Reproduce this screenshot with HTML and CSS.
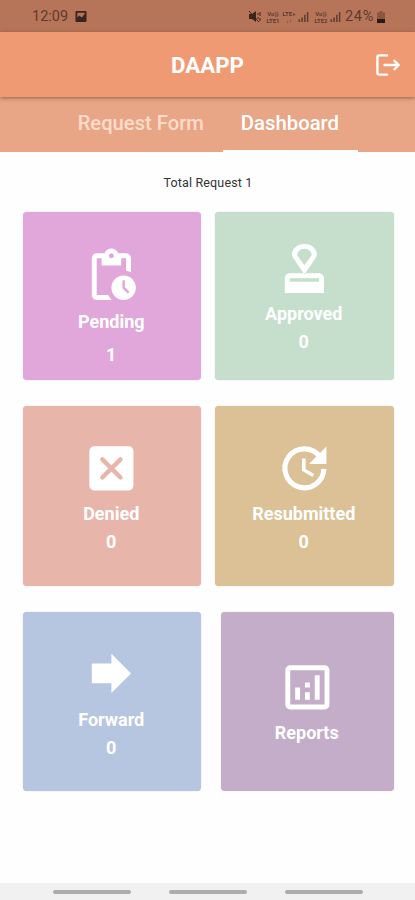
FILE: index.html
```
<!DOCTYPE html>
<html lang="en">
<head>
  <meta charset="UTF-8" />
  <meta name="viewport" content="width=device-width, initial-scale=1.0" />
  <title>DAAPP</title>
  <link rel="stylesheet" href="styles.css">
</head>
<body>
  <div class="status-bar">
    <span class="time">12:09</span>
    <svg class="picture" viewBox="0 0 12 12"><path fill="#3c251c" fill-rule="evenodd" d="M1 0h10a1 1 0 0 1 1 1v10a1 1 0 0 1-1 1H1a1 1 0 0 1-1-1V1a1 1 0 0 1 1-1zM2 2v5l2-2 3 2 3-4V2z"/></svg>
    <div class="status-icons">
      <svg class="mute" viewBox="0 0 13 13"><path fill="#3c251c" d="M1 4h3l4-3v11L4 9H1z"/><path d="M1 1l10 11M10 3v2M12 2v4M10 7v2M12 8v3" stroke="#3c251c" fill="none"/></svg>
      <span class="lte"><span>Vo))</span><span>LTE1</span></span>
      <span class="lte"><span>LTE+</span><span>↓↑</span></span>
      <svg class="signal" viewBox="0 0 11 12"><path d="M1 12V9M4 12V7M7 12V4M10 12V1" stroke="#5e3b2d" stroke-width="1.6"/></svg>
      <span class="lte"><span>Vo))</span><span>LTE2</span></span>
      <svg class="signal" viewBox="0 0 11 12"><path d="M1 12V9M4 12V7M7 12V4M10 12V1" stroke="#5e3b2d" stroke-width="1.6"/></svg>
      <span class="percent">24%</span>
      <svg class="battery" viewBox="0 0 8 12"><path fill="#8a5641" d="M2.500 0h3v1.500H8V9H0V1.500h2.500z"/><path fill="#2c1a13" d="M0 8h8v4H0z"/></svg>
    </div>
  </div>

  <header class="app-bar">
    <h1>DAAPP</h1>
    <svg class="logout" viewBox="0 0 24 22" fill="none" stroke="#fff" stroke-width="2.400" stroke-linecap="round" stroke-linejoin="round"><path d="M11 1.400H3.200Q1.400 1.400 1.400 3.200v15.600q0 1.800 1.800 1.800H11M8.500 11H22.500M18.500 6.800l4.200 4.200-4.200 4.200"/></svg>
  </header>

  <nav class="tabs">
    <a class="tab">Request Form</a>
    <a class="tab active">Dashboard</a>
  </nav>

  <main>
    <p class="total">Total Request 1</p>

    <div class="row">
      <div class="card pending">
        <svg class="icon" viewBox="0 0 24 24"><path d="M17 12c-2.760 0-5 2.240-5 5s2.240 5 5 5 5-2.240 5-5-2.240-5-5-5zm1.650 7.350L16.500 17.200V14h1v2.790l1.850 1.850-.7.71zM18 3h-3.180C14.400 1.840 13.300 1 12 1s-2.400.84-2.820 2H6c-1.100 0-2 .9-2 2v15c0 1.100.9 2 2 2h6.110c-.59-.57-1.070-1.250-1.420-2H6V5h2v3h8V5h2v5.080c.71.1 1.380.31 2 .6V5c0-1.100-.9-2-2-2zm-6 2c-.55 0-1-.45-1-1s.45-1 1-1 1 .45 1 1-.45 1-1 1z"/></svg>
        <span class="label">Pending</span>
        <span class="count">1</span>
      </div>
      <div class="card approved">
        <svg class="icon" viewBox="0 0 24 24"><path fill-rule="evenodd" d="M4 16v6h16v-6c0-1.100-.9-2-2-2H6c-1.100 0-2 .9-2 2zm2 0h12v1.500H6zM12 2C9.600 2 7.800 3.200 7.100 5.200c-.3.900-.2 1.700.2 2.400L12 14.500l4.700-6.900c.4-.7.500-1.500.2-2.400C16.200 3.200 14.400 2 12 2zm0 2c1.400 0 2.400.7 2.900 1.900.1.300.1.600-.1.900L12 10.700 9.200 6.800c-.2-.3-.2-.6-.1-.9C9.600 4.700 10.600 4 12 4z"/></svg>
        <span class="label">Approved</span>
        <span class="count">0</span>
      </div>
    </div>

    <div class="row">
      <div class="card denied">
        <svg class="icon" viewBox="0 0 24 24"><rect x="3" y="3" width="18" height="18" rx="2"/><path d="M8.300 8.300l7.400 7.400M15.700 8.300l-7.400 7.400" stroke="#e8b5aa" stroke-width="1.800" stroke-linecap="round"/></svg>
        <span class="label">Denied</span>
        <span class="count">0</span>
      </div>
      <div class="card resubmitted">
        <svg class="icon" viewBox="0 0 24 24"><path d="M18.300 7.100A7.950 7.950 0 1 0 19.950 12.200" fill="none" stroke="#fff" stroke-width="2.100"/><path d="M21 3.100v7.100h-7.100z"/><path d="M11 8h1.500v4.250l3.500 2.080-.72 1.210L11 13z"/></svg>
        <span class="label">Resubmitted</span>
        <span class="count">0</span>
      </div>
    </div>

    <div class="row">
      <div class="card forward">
        <svg class="icon" viewBox="0 0 24 24"><path d="M12 8V4l8 8-8 8v-4H4V8z"/></svg>
        <span class="label">Forward</span>
        <span class="count">0</span>
      </div>
      <div class="card reports">
        <svg class="icon" viewBox="0 0 24 24"><path d="M19 3H5c-1.100 0-2 .9-2 2v14c0 1.100.9 2 2 2h14c1.100 0 2-.9 2-2V5c0-1.100-.9-2-2-2zm0 16H5V5h14v14z"/><path d="M7 12h2v5H7zM15 7h2v10h-2zM11 14h2v3h-2zM11 10h2v2h-2z"/></svg>
        <span class="label">Reports</span>
      </div>
    </div>
  </main>

  <footer class="nav-bar">
    <span class="pill"></span>
    <span class="pill"></span>
    <span class="pill"></span>
  </footer>
</body>
</html>
```
FILE: styles.css
```
* {
  box-sizing: border-box;
}

body {
  margin: 0;
  height: 900px;
  display: flex;
  flex-direction: column;
  background: #fefefe;
  font-family: Roboto, "Liberation Sans", sans-serif;
  overflow: hidden;
}

svg {
  display: block;
  flex-shrink: 0;
}

.status-bar {
  height: 32px;
  display: flex;
  align-items: center;
  padding: 1px 30px 0 32px;
  background: #b67559;
  color: #5e3b2d;
  font-size: 14.5px;
}

.picture {
  width: 12px;
  height: 11px;
  margin-left: 7px;
}

.status-icons {
  display: flex;
  align-items: center;
  margin-left: auto;
}

.mute {
  width: 13px;
  height: 13px;
  margin-right: 4px;
}

.lte {
  display: flex;
  flex-direction: column;
  align-items: center;
  width: 16px;
  font-size: 6px;
  font-weight: 700;
  line-height: 7px;
}

.signal {
  width: 11px;
  height: 11px;
  margin: 0 4px 0 1px;
}

.percent {
  letter-spacing: 0.7px;
}

.battery {
  width: 8px;
  height: 12px;
  margin-left: 3px;
}

.app-bar {
  height: 65px;
  display: flex;
  align-items: center;
  justify-content: space-between;
  padding: 0 15px 0 171px;
  background: #f09a74;
  box-shadow: 0 1px 4px rgba(90, 50, 30, 0.6);
  z-index: 1;
}

.app-bar h1 {
  margin: 0;
  color: #fff;
  font-size: 22.3px;
  font-weight: 700;
}

.logout {
  width: 24px;
  height: 22px;
}

.tabs {
  height: 55px;
  display: flex;
  justify-content: flex-end;
  padding-right: 57px;
  background: #e8a687;
}

.tab {
  padding: 14px 19px 0;
  color: #fbdccb;
  font-size: 20.2px;
  font-weight: 500;
  line-height: 25px;
}

.tab.active {
  padding: 14px 19px 0 18px;
  color: #fff;
  font-size: 20.3px;
  border-bottom: 2px solid #fff;
}

main {
  flex: 1;
  padding: 0 21.5px 0 22.5px;
}

.total {
  margin: 0;
  height: 60px;
  padding-top: 21px;
  text-align: center;
  color: #333;
  font-size: 12.5px;
  letter-spacing: 0.15px;
  line-height: 20px;
}

.row {
  display: flex;
  justify-content: space-between;
  margin-bottom: 26px;
}

.card {
  width: 178.5px;
  height: 179.5px;
  display: flex;
  flex-direction: column;
  align-items: center;
  padding: 32.5px 1px 0 0;
  border-radius: 4px;
  box-shadow: 0 0 1px rgba(80, 60, 60, 0.35);
  color: #fff;
  font-size: 18px;
  font-weight: 700;
  line-height: 28px;
}

.icon {
  width: 58.8px;
  height: 58.8px;
  margin: 0 -1px 3px 0;
  fill: #fff;
}

.pending {
  height: 168px;
  padding-top: 34px;
  background: #e2a7da;
}

.pending .count {
  margin-top: 5px;
}

.approved {
  height: 168px;
  padding-top: 27px;
  background: #c5dfcc;
}

.approved .icon {
  margin-bottom: 2px;
}

.denied {
  background: #e8b5aa;
}

.resubmitted {
  background: #dcc096;
}

.forward {
  background: #b6c6e0;
}

.reports {
  width: 172.5px;
  padding-top: 46px;
  background: #c3adc9;
}

.nav-bar {
  height: 17px;
  display: flex;
  justify-content: center;
  gap: 38px;
  padding: 7px 0 0 1px;
  background: #f1f1f1;
}

.pill {
  width: 78px;
  height: 4px;
  border-radius: 2px;
  background: #adadad;
}
```
